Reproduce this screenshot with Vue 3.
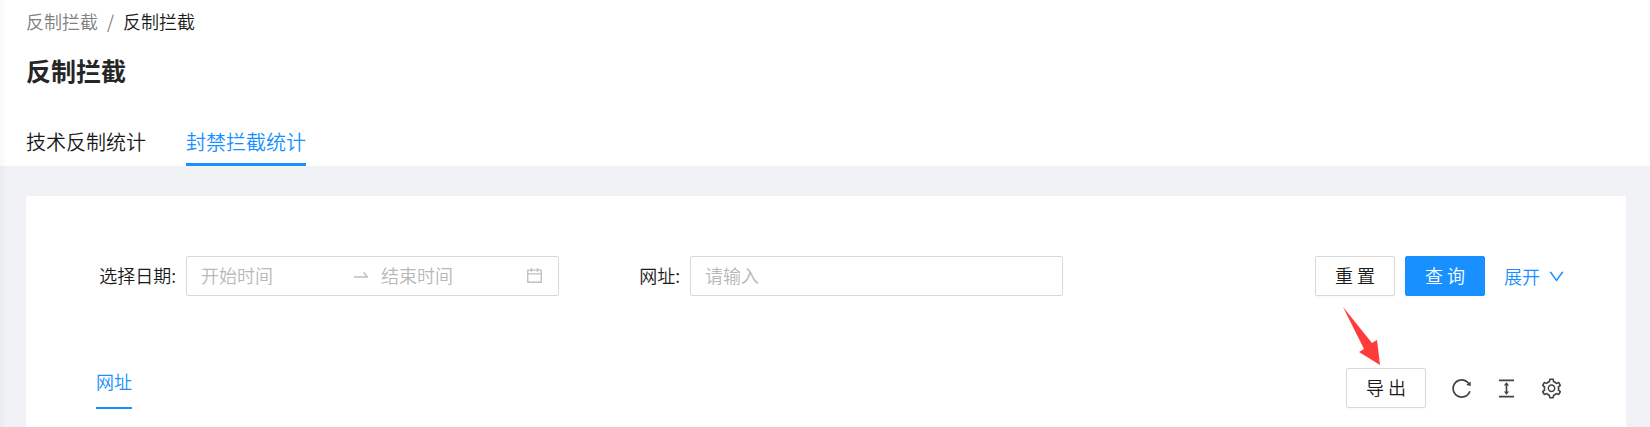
<script setup>
import { ref } from 'vue'

const tabs = ['技术反制统计', '封禁拦截统计']
const activeTab = ref('封禁拦截统计')
const startDate = ref('')
const endDate = ref('')
const url = ref('')

const tools = [
  {
    label: '刷新',
    path: 'M909.1 209.3l-56.4 44.1C775.8 155.1 656.2 92 521.9 92 290 92 102.3 279.5 102 511.5 101.7 743.7 289.8 932 521.9 932c181.3 0 335.8-115 394.6-276.1 1.5-4.2-.7-8.9-4.9-10.3l-56.7-19.5a8 8 0 00-10.1 4.8c-1.8 5-3.8 10-5.9 14.9-17.3 41-42.1 77.8-73.7 109.4A344.77 344.77 0 01655.9 829c-42.3 17.9-87.4 27-133.8 27-46.5 0-91.5-9.1-133.8-27A341.5 341.5 0 01279 755.2a342.16 342.16 0 01-73.7-109.4c-17.9-42.4-27-87.4-27-133.9s9.1-91.5 27-133.9c17.3-41 42.1-77.8 73.7-109.4 31.6-31.6 68.4-56.4 109.3-73.8 42.3-17.9 87.4-27 133.8-27 46.5 0 91.5 9.1 133.8 27a341.5 341.5 0 01109.3 73.8c9.9 9.9 19.2 20.4 27.8 31.4l-60.2 47a8 8 0 003 14.1l175.6 43c5 1.2 9.9-2.6 9.9-7.7l.8-180.9c-.1-6.6-7.8-10.3-13-6.2z'
  },
  {
    label: '密度',
    path: 'M840 836H184c-4.4 0-8 3.6-8 8v60c0 4.4 3.6 8 8 8h656c4.4 0 8-3.6 8-8v-60c0-4.4-3.6-8-8-8zm0-724H184c-4.4 0-8 3.6-8 8v60c0 4.4 3.6 8 8 8h656c4.4 0 8-3.6 8-8v-60c0-4.4-3.6-8-8-8zM610.8 378c6 0 9.4-7 5.7-11.7L515.7 238.7a7.14 7.14 0 00-11.3 0L403.6 366.3a7.23 7.23 0 005.7 11.7H476v268h-62.8c-6 0-9.4 7-5.7 11.7l100.8 127.5c2.9 3.7 8.5 3.7 11.3 0l100.8-127.5c3.7-4.7.4-11.7-5.7-11.7H548V378h62.8z'
  },
  {
    label: '列设置',
    path: 'M924.8 625.7l-65.5-56c3.1-19 4.7-38.4 4.7-57.8s-1.6-38.8-4.7-57.8l65.5-56a32.03 32.03 0 009.3-35.2l-.9-2.6a443.74 443.74 0 00-79.7-137.9l-1.8-2.1a32.12 32.12 0 00-35.1-9.5l-81.3 28.9c-30-24.6-63.5-44-99.7-57.6l-15.7-85a32.05 32.05 0 00-25.8-25.7l-2.7-.5c-52.1-9.4-106.9-9.4-159 0l-2.7.5a32.05 32.05 0 00-25.8 25.7l-15.8 85.4a351.86 351.86 0 00-99 57.4l-81.9-29.1a32 32 0 00-35.1 9.5l-1.8 2.1a446.02 446.02 0 00-79.7 137.9l-.9 2.6c-4.5 12.5-.8 26.5 9.3 35.2l66.3 56.6c-3.1 18.8-4.6 38-4.6 57.1 0 19.2 1.5 38.4 4.6 57.1L99 625.5a32.03 32.03 0 00-9.3 35.2l.9 2.6c18.1 50.4 44.9 96.9 79.7 137.9l1.8 2.1a32.12 32.12 0 0035.1 9.5l81.9-29.1c29.8 24.5 63.1 43.9 99 57.4l15.8 85.4a32.05 32.05 0 0025.8 25.7l2.7.5a449.4 449.4 0 00159 0l2.7-.5a32.05 32.05 0 0025.8-25.7l15.7-85a350 350 0 0099.7-57.6l81.3 28.9a32 32 0 0035.1-9.5l1.8-2.1c34.8-41.1 61.6-87.5 79.7-137.9l.9-2.6c4.5-12.3.8-26.3-9.3-35zM788.3 465.9c2.5 15.1 3.8 30.6 3.8 46.1s-1.3 31-3.8 46.1l-6.6 40.1 74.7 63.9a370.03 370.03 0 01-42.6 73.6L721 702.8l-31.4 25.8c-23.9 19.6-50.5 35-79.3 45.8l-38.1 14.3-17.9 97a377.5 377.5 0 01-85 0l-17.9-97.2-37.8-14.5c-28.5-10.8-55-26.2-78.7-45.7l-31.4-25.9-93.4 33.2c-17-22.9-31.2-47.6-42.6-73.6l75.5-64.5-6.5-40c-2.4-14.9-3.7-30.3-3.7-45.5 0-15.3 1.2-30.6 3.7-45.5l6.5-40-75.5-64.5c11.3-26.1 25.6-50.7 42.6-73.6l93.4 33.2 31.4-25.9c23.7-19.5 50.2-34.9 78.7-45.7l37.9-14.3 17.9-97.2c28.1-3.2 56.8-3.2 85 0l17.9 97 38.1 14.3c28.7 10.8 55.4 26.2 79.3 45.8l31.4 25.8 92.8-32.9c17 22.9 31.2 47.6 42.6 73.6L781.8 426l6.5 39.9zM512 326c-97.2 0-176 78.8-176 176s78.8 176 176 176 176-78.8 176-176-78.8-176-176-176zm79.2 255.2A111.6 111.6 0 01512 614c-29.9 0-58-11.7-79.2-32.8A111.6 111.6 0 01400 502c0-29.9 11.7-58 32.8-79.2C454 401.6 482.1 390 512 390c29.9 0 58 11.6 79.2 32.8A111.6 111.6 0 01624 502c0 29.9-11.7 58-32.8 79.2z'
  }
]
</script>

<template>
  <div class="page">
    <header class="head">
      <nav class="crumbs">
        <a href="#" class="crumb">反制拦截</a>
        <span class="slash">/</span>
        <span class="here">反制拦截</span>
      </nav>
      <h1 class="title">反制拦截</h1>
      <div class="tabs" role="tablist">
        <button
          v-for="tab in tabs"
          :key="tab"
          type="button"
          role="tab"
          class="tab"
          :class="{ active: tab === activeTab }"
          :aria-selected="tab === activeTab"
          @click="activeTab = tab"
        >{{ tab }}</button>
      </div>
    </header>

    <main class="card">
      <form class="search" @submit.prevent>
        <div class="field">
          <label class="label" for="start">选择日期:</label>
          <div class="box">
            <input id="start" v-model="startDate" class="text" type="text" placeholder="开始时间" />
            <svg class="swap" viewBox="0 0 1024 1024" aria-hidden="true"><path d="M873.1 596.2l-164-208A32 32 0 00684 376h-64.8c-6.7 0-10.4 7.7-6.3 13l144.3 183H152c-4.4 0-8 3.6-8 8v60c0 4.4 3.6 8 8 8h695.9c26.8 0 41.7-30.8 25.2-51.8z" /></svg>
            <input v-model="endDate" class="text" type="text" placeholder="结束时间" aria-label="结束时间" />
            <svg class="calendar" viewBox="0 0 1024 1024" aria-hidden="true"><path d="M880 184H712v-64c0-4.4-3.6-8-8-8h-56c-4.4 0-8 3.6-8 8v64H384v-64c0-4.4-3.6-8-8-8h-56c-4.4 0-8 3.6-8 8v64H144c-17.7 0-32 14.3-32 32v664c0 17.7 14.3 32 32 32h736c17.7 0 32-14.3 32-32V216c0-17.7-14.3-32-32-32zm-40 656H184V460h656v380zM184 392V256h128v48c0 4.4 3.6 8 8 8h56c4.4 0 8-3.6 8-8v-48h256v48c0 4.4 3.6 8 8 8h56c4.4 0 8-3.6 8-8v-48h128v136H184z" /></svg>
          </div>
        </div>
        <div class="field">
          <label class="label" for="url">网址:</label>
          <div class="box">
            <input id="url" v-model="url" class="text" type="text" placeholder="请输入" />
          </div>
        </div>
        <div class="actions">
          <button type="reset" class="btn">重 置</button>
          <button type="submit" class="btn primary">查 询</button>
          <a href="#" class="expand">展开
            <svg class="down" viewBox="0 0 1024 1024" aria-hidden="true"><path d="M884 256h-75c-5.1 0-9.9 2.5-12.9 6.6L512 654.2 227.9 262.6c-3-4.1-7.8-6.6-12.9-6.6h-75c-6.5 0-10.3 7.4-6.5 12.7l352.6 486.1c12.8 17.6 39 17.6 51.7 0l352.6-486.1c3.9-5.3.1-12.7-6.4-12.7z" /></svg>
          </a>
        </div>
      </form>

      <section class="toolbar">
        <div role="tablist">
          <button type="button" role="tab" class="subtab" aria-selected="true">网址</button>
        </div>
        <div class="tools">
          <div class="export">
            <button type="button" class="btn">导 出</button>
            <svg class="pointer" viewBox="0 0 38 60" aria-hidden="true"><path d="M1 1L30 37L35 34L38 59L17 46L22 43Z" /></svg>
          </div>
          <button v-for="tool in tools" :key="tool.label" type="button" class="tool" :aria-label="tool.label">
            <svg viewBox="0 0 1024 1024" aria-hidden="true"><path :d="tool.path" /></svg>
          </button>
        </div>
      </section>
    </main>
  </div>
</template>

<style>
body {
  margin: 0;
}
</style>

<style scoped>
.page {
  box-sizing: border-box;
  min-height: 100vh;
  display: flex;
  flex-direction: column;
  background: linear-gradient(to right, #e9ebee, #f0f2f5 8px);
  color: #1a1a1a;
  font-family: "Noto Sans CJK SC", sans-serif;
  font-size: 18px;
  font-weight: 350;
  line-height: 28px;
}
button,
input {
  font: inherit;
  color: inherit;
}
svg {
  display: block;
  fill: currentColor;
}
.head {
  padding: 7px 26px 0;
  background: linear-gradient(to right, #f9f9f9, #fff 8px);
}
.crumbs {
  display: flex;
  gap: 9px;
}
.crumb,
.slash {
  color: #808080;
  text-decoration: none;
}
.title {
  margin: 15px 0 0;
  color: #262626;
  font-size: 25px;
  line-height: 40px;
  font-weight: 700;
}
.tabs {
  display: flex;
  gap: 40px;
  margin-top: 26px;
}
.tab {
  padding: 11px 0 6px;
  border: 0;
  border-bottom: 3px solid transparent;
  background: none;
  font-size: 20px;
  line-height: 30px;
}
.tab.active {
  border-color: #1890ff;
  color: #1890ff;
}
.card {
  flex: 1;
  margin: 30px 24px 0 26px;
  padding-top: 60px;
  border-radius: 2px 2px 0 0;
  background: #fff;
}
.search {
  display: grid;
  grid-template-columns: repeat(3, 1fr);
  gap: 30px;
  padding: 0 59px;
}
.field {
  display: flex;
  align-items: center;
  min-width: 0;
}
.label {
  width: 91px;
  flex: none;
  margin-right: 10px;
  padding-bottom: 2px;
  text-align: right;
}
.box {
  box-sizing: border-box;
  display: flex;
  align-items: center;
  flex: 1;
  min-width: 0;
  height: 40px;
  padding: 0 14px 2px;
  border: 1px solid #d9d9d9;
  border-radius: 2px;
  color: #bfbfbf;
}
.text {
  flex: 1;
  min-width: 0;
  padding: 0;
  border: 0;
  outline: 0;
  background: none;
  color: #262626;
}
.text::placeholder {
  color: #b8b8b8;
  opacity: 1;
}
.swap {
  flex: none;
  width: 20px;
  height: 20px;
  margin: 0 10px;
}
.calendar {
  flex: none;
  width: 19px;
  height: 19px;
  margin-left: 4px;
}
.actions {
  display: flex;
  align-items: center;
  justify-content: flex-end;
  gap: 10px;
  padding-right: 1px;
}
.btn {
  box-sizing: border-box;
  width: 80px;
  height: 40px;
  padding: 0 0 2px;
  border: 1px solid #d9d9d9;
  border-radius: 2px;
  background: #fff;
  box-shadow: 0 2px 0 rgba(0, 0, 0, 0.02);
  white-space: nowrap;
}
.primary {
  border-color: #1890ff;
  background: #1890ff;
  color: #fff;
}
.expand {
  display: flex;
  align-items: center;
  gap: 7px;
  margin-left: 9px;
  color: #1890ff;
  text-decoration: none;
}
.down {
  width: 19px;
  height: 19px;
}
.toolbar {
  display: flex;
  justify-content: space-between;
  align-items: flex-start;
  padding: 71px 63px 16px 70px;
}
.subtab {
  display: block;
  padding: 0 0 12px;
  border: 0;
  border-bottom: 2px solid #1890ff;
  background: none;
  color: #1890ff;
}
.tools {
  display: flex;
  align-items: center;
  gap: 22px;
  margin-top: 1px;
}
.export {
  position: relative;
  margin-right: 2px;
}
.export .btn {
  display: block;
}
.pointer {
  position: absolute;
  left: -4px;
  top: -62px;
  width: 38px;
  height: 60px;
  fill: #ff3b3b;
}
.tool {
  padding: 0;
  border: 0;
  background: none;
  color: #434343;
}
.tool svg {
  width: 23px;
  height: 23px;
}
</style>
